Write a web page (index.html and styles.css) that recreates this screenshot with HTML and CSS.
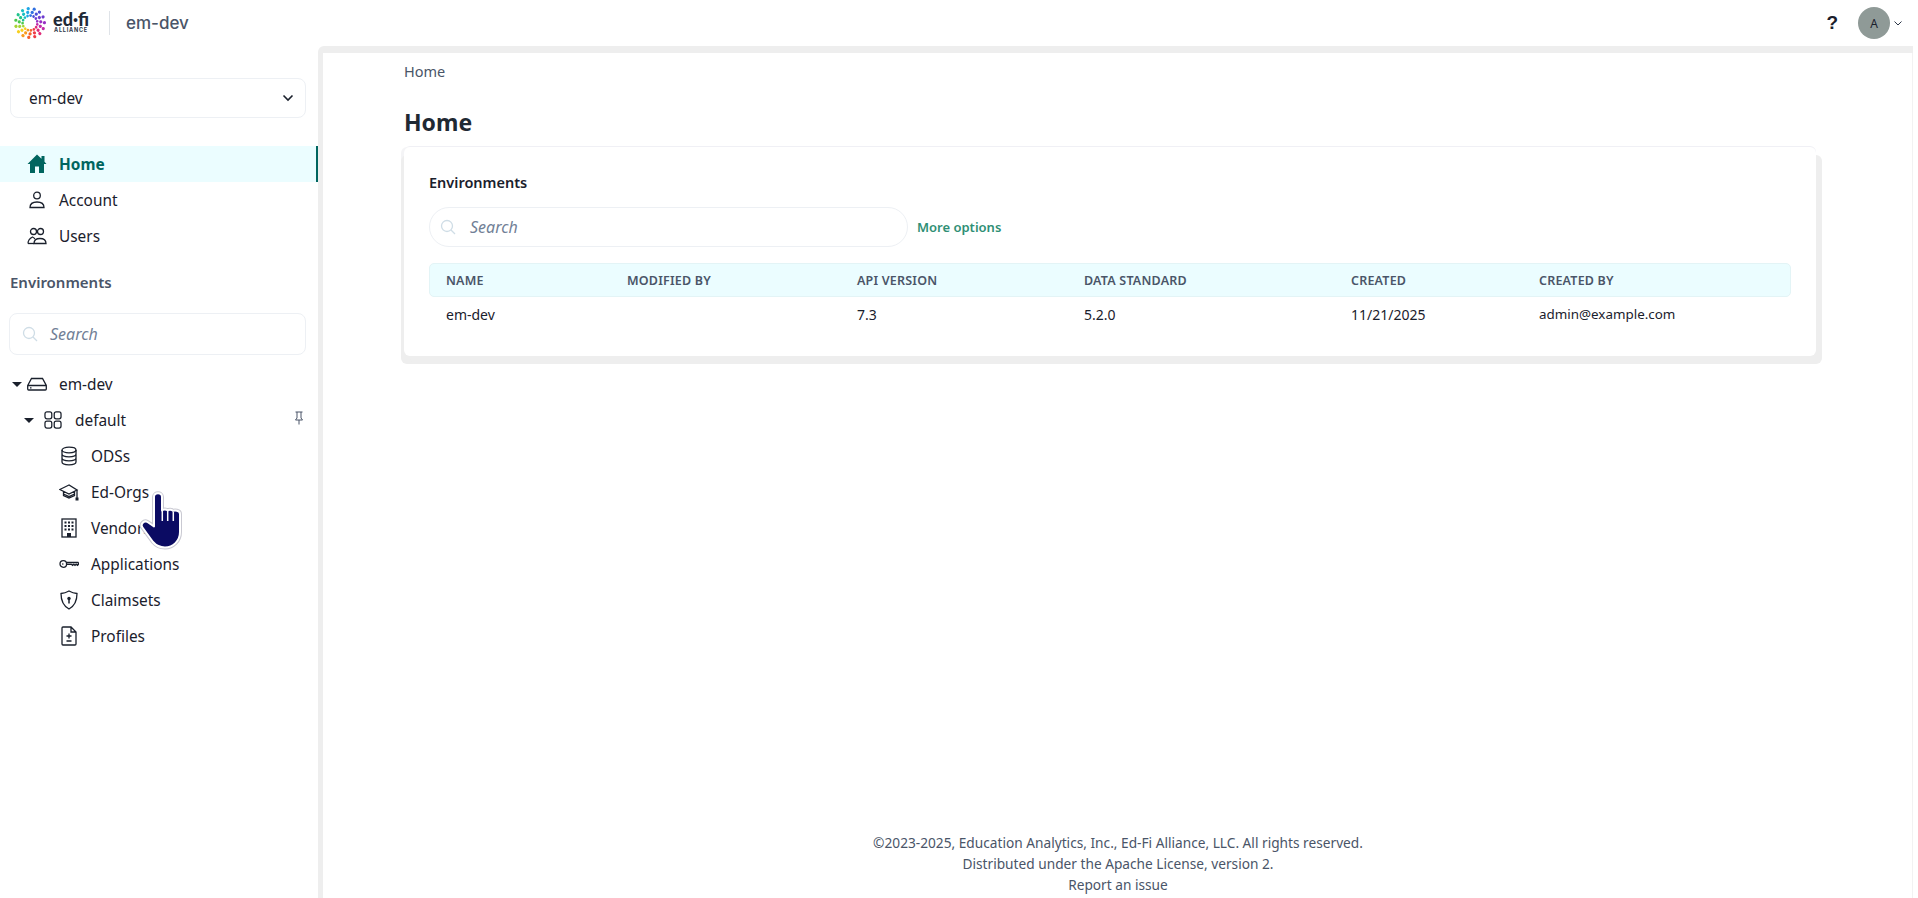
FILE: index.html
```html
<!DOCTYPE html>
<html lang="en">
<head>
<meta charset="utf-8">
<title>Home</title>
<link rel="stylesheet" href="styles.css">
</head>
<body>
<svg class="defs" width="0" height="0" aria-hidden="true">
  <defs>
    <g id="spoke">
      <circle cx="0.6" cy="-7.4" r="1.35"/>
      <circle cx="2.200" cy="-10.6" r="1.6"/>
      <circle cx="4.200" cy="-13.8" r="1.6"/>
    </g>
  </defs>
</svg>
<header class="topbar">
  <div class="brand">
    <svg class="logo-mark" width="32" height="32" viewBox="-16 -16 32 32" aria-hidden="true">
      <use href="#spoke" fill="#2f6fe0"/>
      <use href="#spoke" fill="#4c4fd8" transform="rotate(24)"/>
      <use href="#spoke" fill="#6d3bd0" transform="rotate(48)"/>
      <use href="#spoke" fill="#9a2ec4" transform="rotate(72)"/>
      <use href="#spoke" fill="#c22aa8" transform="rotate(96)"/>
      <use href="#spoke" fill="#e02a78" transform="rotate(120)"/>
      <use href="#spoke" fill="#ef3a45" transform="rotate(144)"/>
      <use href="#spoke" fill="#f5602c" transform="rotate(168)"/>
      <use href="#spoke" fill="#f89a1c" transform="rotate(192)"/>
      <use href="#spoke" fill="#f7cf1e" transform="rotate(216)"/>
      <use href="#spoke" fill="#a6d434" transform="rotate(240)"/>
      <use href="#spoke" fill="#4cc84e" transform="rotate(264)"/>
      <use href="#spoke" fill="#1fc48c" transform="rotate(288)"/>
      <use href="#spoke" fill="#18bfc4" transform="rotate(312)"/>
      <use href="#spoke" fill="#1ea6e6" transform="rotate(336)"/>
    </svg>
    <div class="logo-text">
      <span class="logo-name">ed·fi</span>
      <span class="logo-sub">ALLIANCE</span>
    </div>
    <span class="brand-sep"></span>
    <span class="brand-env">em-dev</span>
  </div>
  <div class="top-actions">
    <span class="help">?</span>
    <span class="avatar">A</span>
    <svg class="avatar-chev" width="8" height="5" viewBox="0 0 8 5" aria-hidden="true"><path d="M.5.500L4 4 7.500.500" fill="none" stroke="#2d3748" stroke-width="1"/></svg>
  </div>
</header>

<div class="shell">
  <aside class="sidebar">
    <div class="select"><span>em-dev</span>
      <svg width="12" height="8" viewBox="0 0 12 8" aria-hidden="true"><path d="M1.500 1.500L6 6l4.500-4.500" fill="none" stroke="#1a202c" stroke-width="1.600"/></svg>
    </div>

    <nav class="nav">
      <a class="nav-item active">
        <svg class="ico" viewBox="0 0 20 20" aria-hidden="true"><path d="M10 .5l4.500 4.300V2h3v5.700L19.500 10H17v9h-5v-6.500H8V19H3v-9H.5z" fill="#00655f"/></svg>
        <span>Home</span>
      </a>
      <a class="nav-item">
        <svg class="ico" viewBox="0 0 20 20" aria-hidden="true"><circle cx="10" cy="5.500" r="3.300" class="ln"/><path d="M3 17.500c0-4 3-5.500 7-5.500s7 1.500 7 5.500z" class="ln"/></svg>
        <span>Account</span>
      </a>
      <a class="nav-item">
        <svg class="ico" viewBox="0 0 20 20" aria-hidden="true"><circle cx="6.500" cy="5.500" r="3" class="ln"/><circle cx="13.500" cy="5.500" r="3" class="ln"/><path d="M1 17.500c0-3 1.500-5 4.500-6.500 1.500.5 2 1.500 2.500 2M7 17.500c0-3.500 2.500-5 6-5s6 1.500 6 5z" class="ln"/><path d="M1 17.500h6" class="ln"/></svg>
        <span>Users</span>
      </a>
    </nav>

    <h3 class="side-title">Environments</h3>
    <div class="side-search">
      <svg class="search-ico" width="16" height="16" viewBox="0 0 16 16" aria-hidden="true"><circle cx="7" cy="7" r="5.500" fill="none" stroke="#cfdde6" stroke-width="1.300"/><path d="M11 11l4 4" stroke="#cfdde6" stroke-width="1.300"/></svg>
      <span>Search</span>
    </div>

    <ul class="tree">
      <li class="tree-row lvl0">
        <span class="caret"></span>
        <svg class="ico" viewBox="0 0 20 20" aria-hidden="true"><path d="M.7 11.500L4.500 4.500h11l3.800 7V15a1 1 0 0 1-1 1H1.700a1 1 0 0 1-1-1zM.7 11.500h18.600" class="ln"/><path d="M3 13.800h1.500" class="ln"/></svg>
        <span>em-dev</span>
      </li>
      <li class="tree-row lvl1">
        <span class="caret"></span>
        <svg class="ico" viewBox="1 1 18.500 18.500" aria-hidden="true"><rect x="2" y="2" width="7" height="7" rx="2" class="ln"/><rect x="11.500" y="2" width="7" height="7" rx="2" class="ln"/><rect x="2" y="11.500" width="7" height="7" rx="2" class="ln"/><rect x="11.500" y="11.500" width="7" height="7" rx="2" class="ln"/></svg>
        <span>default</span>
        <svg class="pin" width="12" height="14" viewBox="0 0 12 14" aria-hidden="true"><path d="M2.500 1h7M4 1v6L2.500 9h7L8 7V1M6 9v4.500" fill="none" stroke="#4a5568" stroke-width="1"/></svg>
      </li>
      <li class="tree-row lvl2">
        <svg class="ico" viewBox="0 0 20 20" aria-hidden="true"><ellipse cx="10" cy="4" rx="7" ry="2.800" class="ln"/><path d="M3 4v12c0 1.600 3 2.800 7 2.800s7-1.200 7-2.800V4M3 8c0 1.600 3 2.800 7 2.800S17 9.600 17 8M3 12c0 1.600 3 2.800 7 2.800s7-1.200 7-2.800" class="ln"/></svg>
        <span>ODSs</span>
      </li>
      <li class="tree-row lvl2">
        <svg class="ico" viewBox="0 0 20 20" aria-hidden="true"><path d="M10 3L.8 7.500 10 12l8-4zM4.500 9.500v4L10 16l5.500-2.500v-4M4.500 12L10 14.500l5.500-2.500" class="ln"/><path d="M18 8v8" class="ln"/><rect x="16.500" y="15.500" width="3" height="3" fill="#1a202c"/></svg>
        <span>Ed-Orgs</span>
      </li>
      <li class="tree-row lvl2">
        <svg class="ico" viewBox="0 0 20 20" aria-hidden="true"><rect x="3" y="1" width="14" height="18" class="ln"/><path d="M8 19v-4h4v4z" fill="#1a202c"/><path d="M5.500 3.500h2v2h-2zM9 3.500h2v2H9zM12.500 3.500h2v2h-2zM5.500 7h2v2h-2zM9 7h2v2H9zM12.500 7h2v2h-2zM5.500 10.500h2v2h-2zM9 10.500h2v2H9zM12.500 10.500h2v2h-2z" fill="#1a202c"/></svg>
        <span>Vendors</span>
      </li>
      <li class="tree-row lvl2">
        <svg class="ico" viewBox="0 0 20 20" aria-hidden="true"><circle cx="4.300" cy="10" r="3.300" class="ln"/><path d="M7.600 8.500H19l1 1.300-1.500 1.500-1.300-1-1.200 1-1.200-1-1.200 1-1.200-1H7.600" class="ln"/><circle cx="3.800" cy="10" r=".8" fill="#1a202c"/></svg>
        <span>Applications</span>
      </li>
      <li class="tree-row lvl2">
        <svg class="ico" viewBox="0 0 20 20" aria-hidden="true"><path d="M10 1c3 1.700 5 2.300 8 2.500 0 7-1.500 12-8 15.500C3.500 15.500 2 10.500 2 3.500 5 3.300 7 2.700 10 1z" class="ln"/><circle cx="10" cy="8.500" r="1.700" fill="#1a202c"/><path d="M10 9v4.500" stroke="#1a202c" stroke-width="1.500"/></svg>
        <span>Claimsets</span>
      </li>
      <li class="tree-row lvl2">
        <svg class="ico" viewBox="0 0 20 20" aria-hidden="true"><path d="M4 1h8l5 5v12a1 1 0 0 1-1 1H4a1 1 0 0 1-1-1V2a1 1 0 0 1 1-1zM12 1v5h5" class="ln"/><path d="M10 7.500v5M7.500 10h5M7.500 15h5" class="ln"/></svg>
        <span>Profiles</span>
      </li>
    </ul>
  </aside>

  <main class="panel">
    <div class="content">
      <div class="breadcrumb">Home</div>
      <h1 class="page-title">Home</h1>
      <section class="card">
        <h2 class="card-title">Environments</h2>
        <div class="toolbar">
          <div class="pill-search">
            <svg class="search-ico" width="16" height="16" viewBox="0 0 16 16" aria-hidden="true"><circle cx="7" cy="7" r="5.500" fill="none" stroke="#cfdde6" stroke-width="1.300"/><path d="M11 11l4 4" stroke="#cfdde6" stroke-width="1.300"/></svg>
            <span>Search</span>
          </div>
          <a class="more">More options</a>
        </div>
        <div class="table">
          <div class="thead">
            <span>NAME</span><span>MODIFIED BY</span><span>API VERSION</span><span>DATA STANDARD</span><span>CREATED</span><span>CREATED BY</span>
          </div>
          <div class="trow">
            <span>em-dev</span><span></span><span>7.3</span><span>5.2.0</span><span>11/21/2025</span><span class="email">admin@example.com</span>
          </div>
        </div>
      </section>
    </div>
    <footer class="footer">
      <div>©2023-2025, Education Analytics, Inc., Ed-Fi Alliance, LLC. All rights reserved.</div>
      <div>Distributed under the Apache License, version 2.</div>
      <div class="report">Report an issue</div>
    </footer>
  </main>
</div>

<svg class="hand" width="52" height="64" viewBox="0 0 52 64" aria-hidden="true">
  <path class="hand-edge" d="M19 7c0-5 8-5 8 0v13.500c1-1.300 4.500-1.500 5.500 0 1-1 4.500-1 5.500.5 1.200-.8 7-1 7 3V42c0 9-7 15.500-15 15.500-5 0-9-2-12-5.500L7.500 37.500c-2.500-3.500 1.500-7.500 5-5.500l6.500 4.500z"/>
  <path class="hand-fill" d="M19 7c0-5 8-5 8 0v13.500c1-1.300 4.500-1.500 5.500 0 1-1 4.500-1 5.500.5 1.200-.8 7-1 7 3V42c0 9-7 15.500-15 15.500-5 0-9-2-12-5.500L7.500 37.500c-2.500-3.500 1.500-7.500 5-5.500l6.500 4.500z"/>
  <path class="hand-slit" d="M27.300 21v10M32.700 21v10M38.300 22v9"/>
</svg>
</body>
</html>
```

FILE: styles.css
```css
* { box-sizing: border-box; }
html, body { margin: 0; height: 100%; }
body {
  display: flex;
  flex-direction: column;
  height: 898px;
  overflow: hidden;
  background: #fff;
  color: #1a202c;
  font-family: "Noto Sans", "Liberation Sans", sans-serif;
  font-size: 15.400px;
  position: relative;
}
.defs { position: absolute; }

/* top bar */
.topbar {
  height: 46px;
  flex: none;
  display: flex;
  align-items: center;
  justify-content: space-between;
  padding: 0 16px 0 14px;
}
.brand { display: flex; align-items: center; }
.logo-mark { display: block; margin-right: 5px; }
.logo-text { display: flex; flex-direction: column; align-items: center; width: 40px; }
.logo-name {
  font: 900 18px/15px Lato, sans-serif;
  color: #1f2a37;
}
.logo-sub {
  font: 700 5.500px/7px Inter, sans-serif;
  letter-spacing: .8px;
  color: #2d3748;
}
.brand-sep { width: 1px; height: 24px; background: #dfe3e8; margin: 0 16px 0 18px; }
.brand-env { font: 500 17px/22px Inter, sans-serif; color: #4a5568; }
.top-actions { display: flex; align-items: center; }
.help { font: 700 19px/22px "Liberation Sans", sans-serif; color: #1a202c; margin-right: 20px; }
.avatar {
  width: 32px;
  height: 32px;
  border-radius: 50%;
  background: #8f9a97;
  display: flex;
  align-items: center;
  justify-content: center;
  font-size: 12px;
  color: #1a202c;
}
.avatar-chev { margin-left: 4px; }

/* layout */
.shell { flex: 1; display: flex; min-height: 0; }
.sidebar { width: 318px; flex: none; padding-top: 32px; }

.select {
  margin: 0 12px 0 10px;
  height: 40px;
  border: 1px solid #edf0f4;
  border-radius: 8px;
  padding: 0 11px 0 18px;
  display: flex;
  align-items: center;
  justify-content: space-between;
}
.nav { margin-top: 28px; }
.nav-item {
  height: 36px;
  display: flex;
  align-items: center;
  padding-left: 27px;
  gap: 12px;
  color: #1a202c;
}
.nav-item.active {
  background: #ebfdff;
  border-right: 2px solid #00655f;
  color: #00655f;
  font-weight: 700;
}
.ico { width: 20px; height: 20px; flex: none; }
.ln { fill: none; stroke: #1a202c; stroke-width: 1.300; }

.side-title {
  margin: 17px 0 0 10px;
  font-size: 15px;
  line-height: 22px;
  font-weight: 600;
  color: #4a5568;
}
.side-search {
  margin: 20px 12px 0 9px;
  height: 42px;
  border: 1px solid #edf0f4;
  border-radius: 8px;
  display: flex;
  align-items: center;
  padding-left: 12px;
  gap: 12px;
  font-style: italic;
  font-size: 16px;
  color: #718096;
}
.tree { list-style: none; margin: 11px 0 0; padding: 0; }
.tree-row { height: 36px; display: flex; align-items: center; }
.lvl0 { padding-left: 12px; }
.lvl1 { padding-left: 24px; padding-right: 13px; }
.lvl2 { padding-left: 59px; gap: 12px; }
.lvl0 .ico { margin: 0 12px 0 5px; }
.lvl1 .ico { width: 18px; height: 18px; margin: 0 13px 0 10px; }
.caret {
  width: 0;
  height: 0;
  border-left: 5px solid transparent;
  border-right: 5px solid transparent;
  border-top: 5px solid #1a202c;
}
.pin { margin-left: auto; margin-top: -5px; }

/* main */
.panel {
  flex: 1;
  min-width: 0;
  display: flex;
  flex-direction: column;
  background: #fff;
  border-top: 7px solid #eeeeee;
  border-left: 5px solid #eeeeee;
  border-top-left-radius: 6px;
  box-shadow: inset -1px 0 0 #f2f2f2;
  margin-right: 5px;
}
.content { flex: 1; padding: 0 97px 0 81px; }
.breadcrumb { font-size: 14.500px; line-height: 20px; margin-top: 8px; color: #4a5568; }
.page-title {
  margin: 26px 0 0;
  font-size: 23px;
  line-height: 30px;
  font-weight: 700;
  color: #1f2933;
}
.card {
  margin-top: 10px;
  height: 209px;
  width: 1412px;
  border-radius: 6px;
  background: #fff;
  padding: 24px 25px 0;
  box-shadow: 6px 8px 0 #eeeeee, -3px 8px 0 #eeeeee, -3px 0 0 #f4f4f6, 0 -1px 0 #f0f0f5;
}
.card-title {
  margin: 0;
  font-size: 14.500px;
  line-height: 22px;
  font-weight: 600;
  color: #1a202c;
}
.toolbar { display: flex; align-items: center; gap: 9px; margin-top: 14px; }
.pill-search {
  width: 479px;
  height: 40px;
  border: 1px solid #edf0f4;
  border-radius: 20px;
  display: flex;
  align-items: center;
  padding-left: 10px;
  gap: 14px;
  font-style: italic;
  font-size: 16px;
  color: #718096;
}
.more { font-size: 13px; font-weight: 600; color: #2f8f75; }
.table { margin-top: 16px; width: 1362px; }
.thead, .trow {
  display: grid;
  grid-template-columns: 181px 230px 227px 267px 188px 1fr;
  padding-left: 16px;
  align-items: center;
}
.thead {
  height: 34px;
  background: #ebfdff;
  border: 1px solid #e3f4f6;
  border-radius: 5px;
  font-size: 12.500px;
  font-weight: 600;
  letter-spacing: .2px;
  color: #4a5568;
}
.trow { height: 34px; padding-left: 17px; font-size: 14px; color: #1a202c; }
.email { font-size: 13.400px; }

.footer {
  flex: none;
  padding-bottom: 3px;
  text-align: center;
  font-size: 13.700px;
  line-height: 21px;
  color: #4a5568;
}

/* cursor overlay */
.hand { position: absolute; left: 135px; top: 490px; }
.hand-edge { fill: none; stroke: #c9c9d2; stroke-width: 4; stroke-linejoin: round; }
.hand-fill { fill: #0b0b63; stroke: #fff; stroke-width: 2; stroke-linejoin: round; }
.hand-slit { fill: none; stroke: #fff; stroke-width: 1.500; }
```
